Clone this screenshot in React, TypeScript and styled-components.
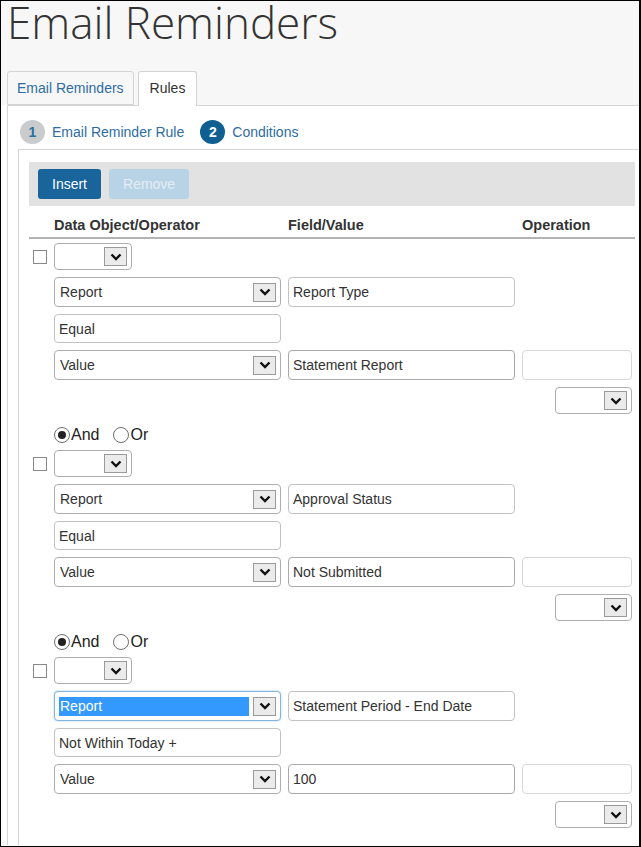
import styled, { createGlobalStyle } from "styled-components";

const GlobalStyle = createGlobalStyle`
    * { box-sizing: border-box; }
    body {
        margin: 0;
        font-family: "Liberation Sans", Arial, sans-serif;
        color: #333;
    }
`

const Frame = styled.div`
    width: 641px;
    height: 847px;
    border: 1px solid #000;
    border-right-width: 2px;
    background: #fff;
`

const Header = styled.div`
    background: #f7f7f7;
    padding-left: 6px;
`

const Title = styled.h1`
    margin: 0;
    height: 70px;
    font-family: "Open Sans", sans-serif;
    font-weight: 300;
    font-size: 44px;
    line-height: 42px;
    color: #333;
`

const TabList = styled.div`
    display: flex;
    gap: 4px;
    height: 34px;
    align-items: flex-end;
`

const Tab = styled.div<{ $active?: boolean }>`
    height: ${p => p.$active ? "35px" : "34px"};
    padding: 0 ${p => p.$active ? "11px" : "9px"};
    margin-bottom: ${p => p.$active ? "-1px" : "0"};
    border: 1px solid #d4d4d4;
    border-bottom: ${p => p.$active ? "none" : "1px solid #d4d4d4"};
    border-radius: 3px 3px 0 0;
    background: ${p => p.$active ? "#fff" : "#f7f7f7"};
    color: ${p => p.$active ? "#333" : "#2e6da4"};
    font-size: 14px;
    line-height: 32px;
    position: relative;
    z-index: 1;
`

const TabPanel = styled.div`
    margin-left: 6px;
    border-top: 1px solid #d4d4d4;
    border-left: 1px solid #d4d4d4;
`

const Steps = styled.div`
    height: 43px;
    display: flex;
    align-items: center;
    padding: 9px 0 0 12px;
    font-size: 14px;
`

const StepNum = styled.span<{ $current?: boolean }>`
    width: 25px;
    height: 24px;
    border-radius: 50%;
    display: inline-flex;
    align-items: center;
    justify-content: center;
    font-weight: bold;
    font-size: 14px;
    background: ${p => p.$current ? "#0f5f93" : "#c9cbcd"};
    color: ${p => p.$current ? "#fff" : "#2d6ea3"};
    margin-right: 7px;
`

const StepLabel = styled.span`
    color: #2e6da4;
    margin-right: 16px;
`

const Inner = styled.div`
    margin-left: 10px;
    border-top: 1px solid #d4d4d4;
    border-left: 1px solid #d4d4d4;
    padding: 12px 4px 0 10px;
    height: 696px;
`

const Toolbar = styled.div`
    height: 44px;
    background: #e2e2e2;
    display: flex;
    align-items: center;
    gap: 8px;
    padding-left: 9px;
`

const Button = styled.button<{ $disabled?: boolean }>`
    height: 30px;
    border: none;
    border-radius: 3px;
    padding: 0 14px;
    font-family: inherit;
    font-size: 14px;
    background: ${p => p.$disabled ? "#b9d3e6" : "#19649b"};
    color: ${p => p.$disabled ? "#e3edf4" : "#fff"};
`

const Grid = styled.div`
    display: grid;
    grid-template-columns: 18px 227px 227px 110px;
    column-gap: 7px;
    row-gap: 7px;
    align-items: center;
`

const HeadRow = styled(Grid)`
    height: 33px;
    padding: 11px 0 4px;
    border-bottom: 2px solid #b3b3b3;
    margin-bottom: 4px;
    font-weight: bold;
    font-size: 14.5px;
    line-height: 16px;
    color: #333;
`

const HeadCell = styled.div<{ $col: number }>`
    grid-column: ${p => p.$col};
`

const Cell = styled.div<{ $col: number; $end?: boolean }>`
    grid-column: ${p => p.$col};
    display: flex;
    justify-content: ${p => p.$end ? "flex-end" : "flex-start"};
`

const Checkbox = styled.span`
    width: 14px;
    height: 14px;
    margin-left: 4px;
    border: 1px solid #8a8a8a;
    background: #fff;
`

const Field = styled.div<{ $w?: number; $h?: number; $tone?: string }>`
    width: ${p => p.$w ? `${p.$w}px` : "100%"};
    height: ${p => p.$h ?? 30}px;
    border: 1px solid ${p => p.$tone ?? "#c2c2c2"};
    border-radius: 4px;
    background: #fff;
    display: flex;
    align-items: center;
    padding: 0 4px 0 4px;
    font-size: 14px;
    color: #333;
`

const SelectBox = styled(Field)<{ $focus?: boolean }>`
    border-color: ${p => p.$focus ? "#86b4e0" : "#aeaeae"};
    box-shadow: ${p => p.$focus ? "0 0 2px #9cc3ea" : "none"};
`

const SelectText = styled.span<{ $focus?: boolean }>`
    flex: 1;
    height: 19px;
    line-height: 19px;
    padding-left: 1px;
    margin-right: 4px;
    background: ${p => p.$focus ? "#3399ff" : "transparent"};
    color: ${p => p.$focus ? "#fff" : "#333"};
`

const Arrow = styled.span`
    width: 23px;
    height: 19px;
    border: 1px solid #9a9a9a;
    background: #ebebeb;
    display: flex;
    align-items: center;
    justify-content: center;
`

const RadioRow = styled.div`
    display: flex;
    align-items: center;
    height: 18px;
    margin: 12px 0 6px 25px;
    font-size: 16px;
    color: #222;
    gap: 14px;
`

const RadioItem = styled.label`
    display: flex;
    align-items: center;
`

const RadioDot = styled.span<{ $on?: boolean }>`
    width: 16px;
    height: 16px;
    border-radius: 50%;
    border: 1px solid #6f6f6f;
    background: #fff;
    display: inline-flex;
    align-items: center;
    justify-content: center;
    margin-right: 1px;
    &::after {
        content: "";
        width: 8px;
        height: 8px;
        border-radius: 50%;
        background: ${p => p.$on ? "#222" : "transparent"};
    }
`

function Chevron() {
    return (
        <svg width="12" height="8" viewBox="0 0 12 8">
            <path d="M1.5 1.5 L6 6 L10.5 1.5" fill="none" stroke="#111" strokeWidth="2.4" />
        </svg>
    )
}

function Select({ text = "", w, h = 30, focus }: { text?: string; w?: number; h?: number; focus?: boolean }) {
    return (
        <SelectBox $w={w} $h={h} $focus={focus}>
            <SelectText $focus={focus}>{text}</SelectText>
            <Arrow><Chevron /></Arrow>
        </SelectBox>
    )
}

type Condition = { obj: string; field: string; op: string; value: string; focus?: boolean }

const conditions: Condition[] = [
    { obj: "Report", field: "Report Type", op: "Equal", value: "Statement Report" },
    { obj: "Report", field: "Approval Status", op: "Equal", value: "Not Submitted" },
    { obj: "Report", field: "Statement Period - End Date", op: "Not Within Today +", value: "100", focus: true },
]

function Group({ c }: { c: Condition }) {
    return (
        <Grid>
            <Cell $col={1}><Checkbox /></Cell>
            <Cell $col={2}><Select w={78} h={27} /></Cell>
            <Cell $col={2}><Select text={c.obj} focus={c.focus} /></Cell>
            <Cell $col={3}><Field>{c.field}</Field></Cell>
            <Cell $col={2}><Field $h={29}>{c.op}</Field></Cell>
            <Cell $col={2}><Select text="Value" /></Cell>
            <Cell $col={3}><Field $tone="#a9a9a9">{c.value}</Field></Cell>
            <Cell $col={4}><Field $tone="#d6d6d6" /></Cell>
            <Cell $col={4} $end><Select w={77} h={27} /></Cell>
        </Grid>
    )
}

export default function App() {
    return (
        <>
            <GlobalStyle />
            <Frame>
                <Header>
                    <Title>Email Reminders</Title>
                    <TabList>
                        <Tab>Email Reminders</Tab>
                        <Tab $active>Rules</Tab>
                    </TabList>
                </Header>
                <TabPanel>
                    <Steps>
                        <StepNum>1</StepNum>
                        <StepLabel>Email Reminder Rule</StepLabel>
                        <StepNum $current>2</StepNum>
                        <StepLabel>Conditions</StepLabel>
                    </Steps>
                    <Inner>
                        <Toolbar>
                            <Button>Insert</Button>
                            <Button $disabled>Remove</Button>
                        </Toolbar>
                        <HeadRow>
                            <HeadCell $col={2}>Data Object/Operator</HeadCell>
                            <HeadCell $col={3}>Field/Value</HeadCell>
                            <HeadCell $col={4}>Operation</HeadCell>
                        </HeadRow>
                        {conditions.map((c, i) => (
                            <div key={i}>
                                <Group c={c} />
                                {i < conditions.length - 1 && (
                                    <RadioRow>
                                        <RadioItem><RadioDot $on />And</RadioItem>
                                        <RadioItem><RadioDot />Or</RadioItem>
                                    </RadioRow>
                                )}
                            </div>
                        ))}
                    </Inner>
                </TabPanel>
            </Frame>
        </>
    );
}
